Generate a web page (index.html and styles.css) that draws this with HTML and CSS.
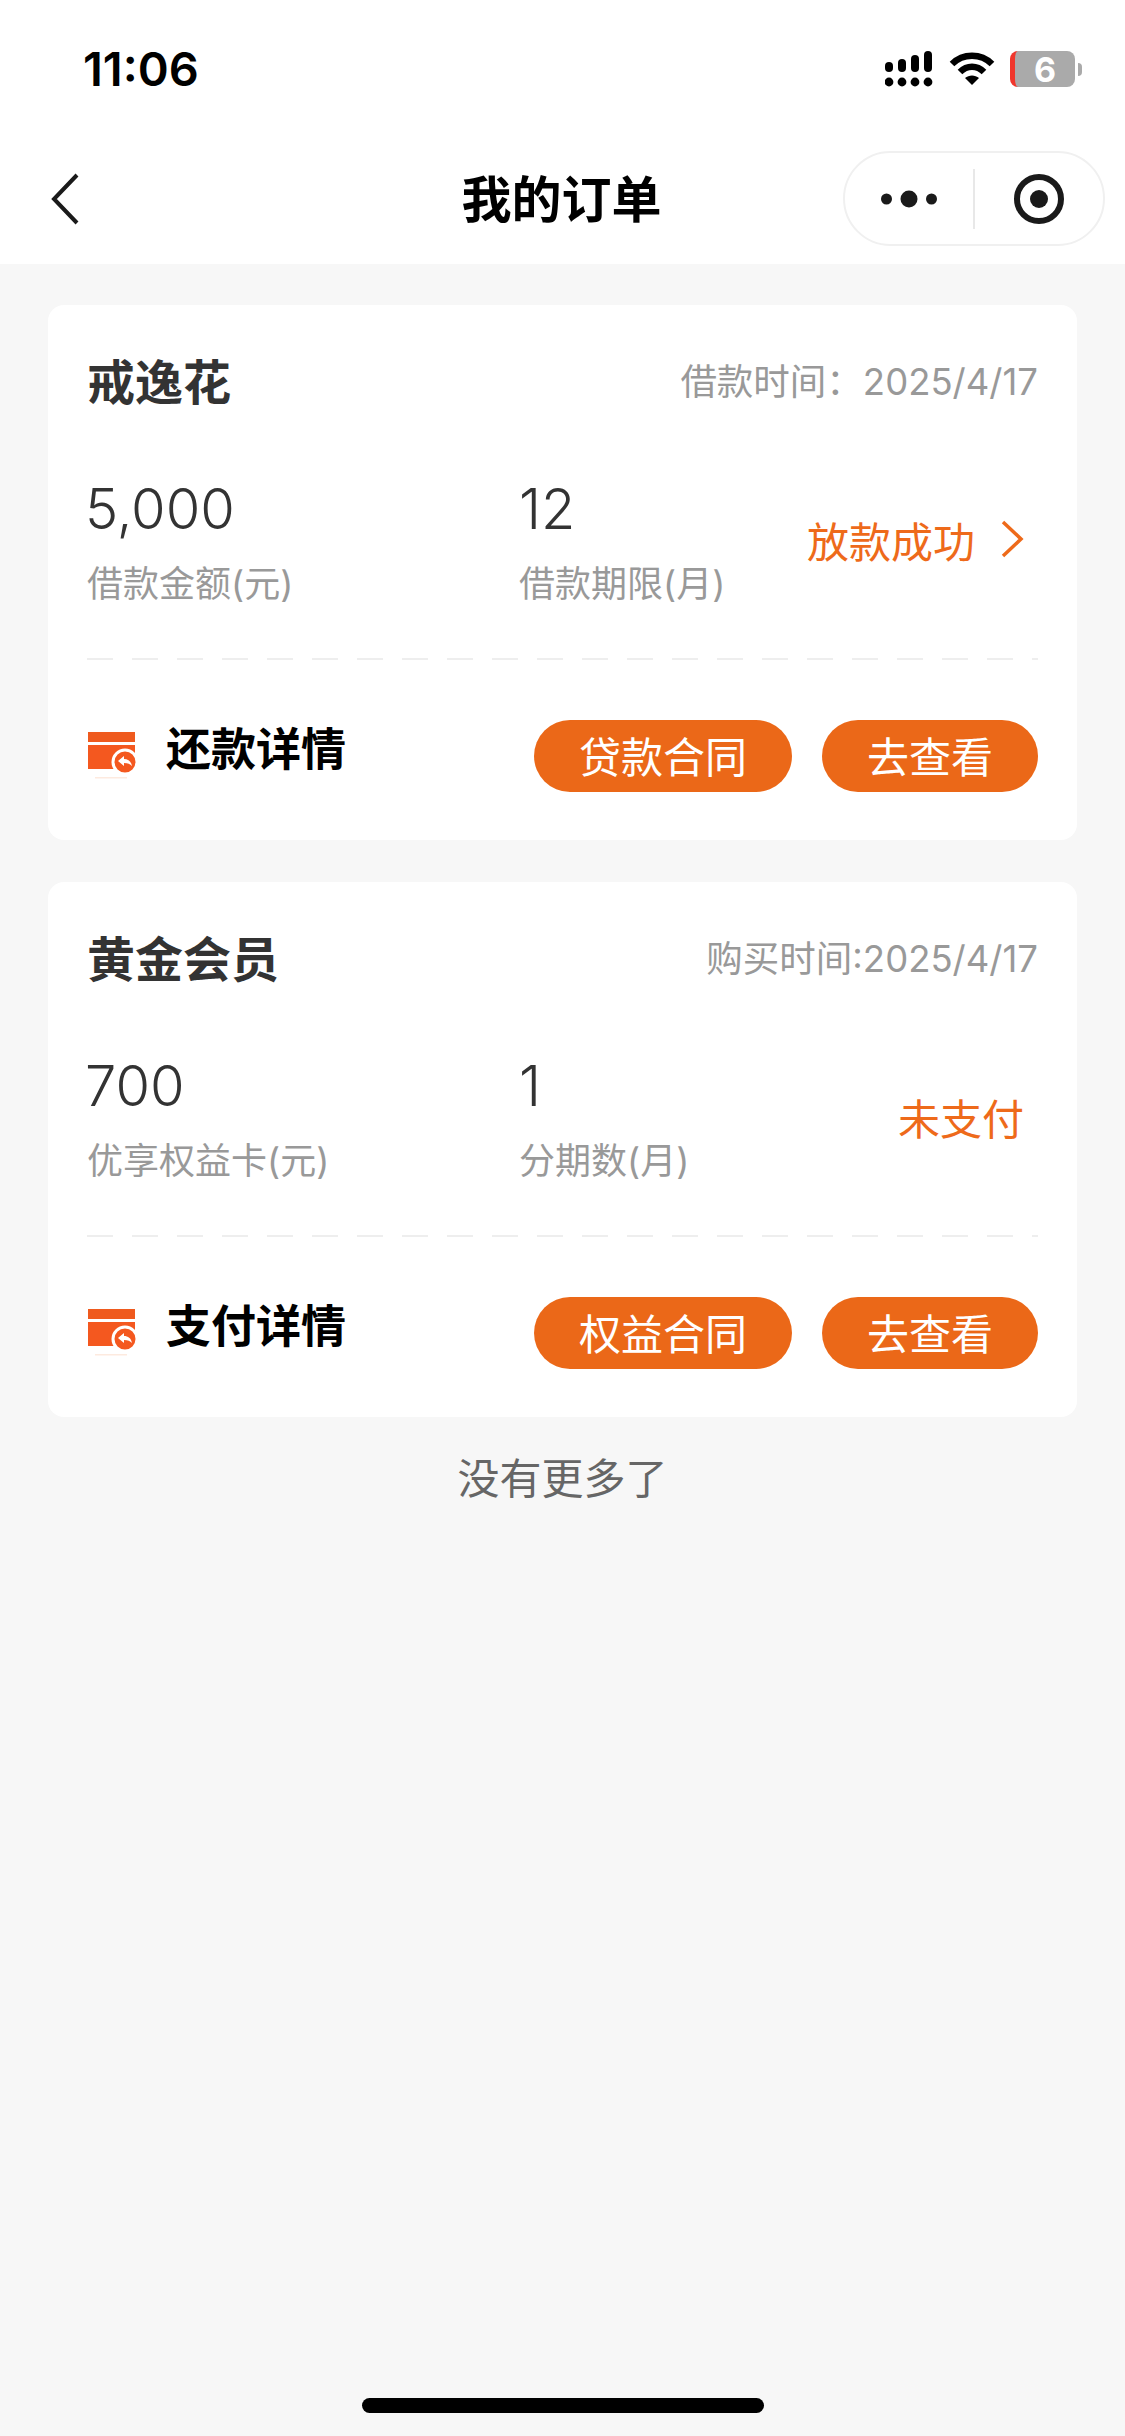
FILE: index.html
```html
<!DOCTYPE html>
<html lang="zh-CN">
<head>
    <meta charset="UTF-8">
    <meta name="viewport" content="width=device-width, initial-scale=1.0">
    <title>我的订单</title>
    <link rel="stylesheet" href="styles.css">
</head>
<body>
    <header class="top">
        <div class="status-bar">
            <span class="clock">11:06</span>
            <div class="status-icons">
                <svg class="signal" width="48" height="36" viewBox="0 0 48 36">
                    <rect x="0" y="11" width="8" height="10" rx="4"/>
                    <rect x="13" y="8" width="8" height="13" rx="4"/>
                    <rect x="26" y="4" width="8" height="17" rx="4"/>
                    <rect x="39" y="0" width="8" height="21" rx="4"/>
                    <circle cx="4" cy="31" r="4.4"/>
                    <circle cx="17" cy="31" r="4.4"/>
                    <circle cx="30" cy="31" r="4.4"/>
                    <circle cx="43" cy="31" r="4.4"/>
                </svg>
                <svg class="wifi" width="46" height="34" viewBox="0 0 46 34">
                    <path d="M3 12 C14 1 32 1 43 12" fill="none" stroke="#000" stroke-width="6.5"/>
                    <path d="M11 20 C18 13 28 13 35 20" fill="none" stroke="#000" stroke-width="6.5"/>
                    <path d="M16 26 C20 22.500 26 22.500 30 26 L23 33 Z"/>
                </svg>
                <div class="battery"><span class="battery-num">6</span></div>
                <div class="battery-nub"></div>
            </div>
        </div>
        <nav class="nav">
            <svg class="back" width="30" height="52" viewBox="0 0 30 52">
                <path d="M27 2 L4 26 L27 50" fill="none" stroke="#1a1a1a" stroke-width="4"/>
            </svg>
            <h1>我的订单</h1>
            <div class="capsule">
                <svg width="56" height="22" viewBox="0 0 56 22">
                    <circle cx="5.500" cy="11" r="5.500"/>
                    <circle cx="28" cy="11" r="8.500"/>
                    <circle cx="50.500" cy="11" r="5.500"/>
                </svg>
                <span class="capsule-line"></span>
                <svg width="52" height="52" viewBox="0 0 52 52">
                    <circle cx="26" cy="26" r="22" fill="none" stroke="#1a1a1a" stroke-width="6"/>
                    <circle cx="26" cy="26" r="9" fill="#1a1a1a"/>
                </svg>
            </div>
        </nav>
    </header>

    <main class="list">
        <section class="card">
            <div class="card-head">
                <h2>戒逸花</h2>
                <span class="time">借款时间：2025/4/17</span>
            </div>
            <div class="stats">
                <div class="stat stat-first">
                    <div class="num">5,000</div>
                    <div class="label">借款金额(元)</div>
                </div>
                <div class="stat">
                    <div class="num">12</div>
                    <div class="label">借款期限(月)</div>
                </div>
                <div class="state">
                    放款成功
                    <svg width="26" height="38" viewBox="0 0 26 38">
                        <path d="M4 2 L22 19 L4 36" fill="none" stroke="#ee6a1a" stroke-width="3.500"/>
                    </svg>
                </div>
            </div>
            <div class="dash-line"></div>
            <div class="card-foot">
                <svg class="card-icon" width="50" height="50" viewBox="0 0 50 50">
                    <rect x="1" y="1" width="47" height="10" fill="#ef5a1e"/>
                    <rect x="1" y="14" width="47" height="24" fill="#f4581f"/>
                    <circle cx="38" cy="31" r="12" fill="#f4581f" stroke="#fff" stroke-width="3"/>
                    <path d="M31 30 L37 25 L37 28 C41 28 44 30 45 35 C43 33 41 32 37 32 L37 35 Z" fill="#fff"/>
                    <rect x="8" y="46" width="32" height="1.500" fill="#fdeadf"/>
                </svg>
                <span class="foot-title">还款详情</span>
                <a class="pill pill-wide">贷款合同</a>
                <a class="pill">去查看</a>
            </div>
        </section>

        <section class="card">
            <div class="card-head">
                <h2>黄金会员</h2>
                <span class="time">购买时间:2025/4/17</span>
            </div>
            <div class="stats">
                <div class="stat stat-first">
                    <div class="num">700</div>
                    <div class="label">优享权益卡(元)</div>
                </div>
                <div class="stat">
                    <div class="num">1</div>
                    <div class="label">分期数(月)</div>
                </div>
                <div class="state state-unpaid">未支付</div>
            </div>
            <div class="dash-line"></div>
            <div class="card-foot">
                <svg class="card-icon" width="50" height="50" viewBox="0 0 50 50">
                    <rect x="1" y="1" width="47" height="10" fill="#ef5a1e"/>
                    <rect x="1" y="14" width="47" height="24" fill="#f4581f"/>
                    <circle cx="38" cy="31" r="12" fill="#f4581f" stroke="#fff" stroke-width="3"/>
                    <path d="M31 30 L37 25 L37 28 C41 28 44 30 45 35 C43 33 41 32 37 32 L37 35 Z" fill="#fff"/>
                    <rect x="8" y="46" width="32" height="1.500" fill="#fdeadf"/>
                </svg>
                <span class="foot-title">支付详情</span>
                <a class="pill pill-wide">权益合同</a>
                <a class="pill">去查看</a>
            </div>
        </section>

        <p class="no-more">没有更多了</p>
    </main>

    <div class="home-bar"></div>
</body>
</html>
```

FILE: styles.css
```css
* {
    box-sizing: border-box;
}
html, body {
    height: 100%;
}
body {
    margin: 0;
    display: flex;
    flex-direction: column;
    background-color: #f7f7f7;
    font-family: Inter, "Noto Sans CJK SC", sans-serif;
    color: #333;
}
.top {
    height: 264px;
    background-color: #fff;
}
.status-bar {
    height: 132px;
    padding: 51px 43px 0 83px;
    display: flex;
    justify-content: space-between;
    align-items: flex-start;
}
.clock {
    font-size: 47px;
    line-height: 36px;
    font-weight: 600;
    color: #000;
}
.status-icons {
    display: flex;
    align-items: center;
    height: 36px;
}
.wifi {
    margin-left: 16px;
}
.battery {
    width: 65px;
    height: 36px;
    margin-left: 15px;
    display: flex;
    align-items: center;
    justify-content: center;
    background-color: #aaa;
    border-left: 5px solid #f0362c;
    border-radius: 8px;
}
.battery-num {
    font-size: 34px;
    font-weight: 700;
    color: #fff;
}
.battery-nub {
    width: 4px;
    height: 13px;
    margin-left: 3px;
    background-color: #aaa;
    border-radius: 0 4px 4px 0;
}
.nav {
    height: 132px;
    padding: 19px 20px 18px;
    display: grid;
    grid-template-columns: 1fr auto 1fr;
    align-items: center;
}
.back {
    display: block;
    margin-left: 30px;
}
.nav h1 {
    margin: 0 2px 5px 0;
    font-size: 50px;
    font-weight: 700;
    color: #000;
}
.capsule {
    justify-self: end;
    width: 262px;
    height: 95px;
    display: flex;
    align-items: center;
    padding-left: 36px;
    border: 2px solid #f0f0f0;
    border-radius: 48px;
}
.capsule svg {
    display: block;
    fill: #1a1a1a;
}
.capsule-line {
    width: 2px;
    height: 60px;
    margin: 0 38px 0 36px;
    background-color: #e8e8e8;
}
.list {
    flex: 1;
    padding: 41px 48px 0;
}
.card {
    height: 535px;
    margin-bottom: 42px;
    padding: 0 39px;
    background-color: #fff;
    border-radius: 16px;
}
.card-head {
    height: 148px;
    display: flex;
    justify-content: space-between;
    align-items: center;
}
.card-head h2 {
    margin: 0;
    font-size: 48px;
    font-weight: 700;
    color: #333;
}
.time {
    font-size: 36.5px;
    color: #999;
}
.stats {
    height: 205px;
    padding-top: 20px;
    display: flex;
}
.stat {
    width: 288px;
}
.stat-first {
    width: 432px;
}
.num {
    height: 72px;
    margin-left: -2px;
    font-size: 56px;
    line-height: 72px;
    font-weight: 350;
    color: #333;
}
.stat + .stat .num {
    margin-left: 0;
}
.label {
    margin-top: 14px;
    font-size: 36px;
    line-height: 50px;
    color: #999;
}
.state {
    height: 68px;
    margin-top: 32px;
    display: flex;
    align-items: center;
    font-size: 42px;
    color: #ee6a1a;
}
.state svg {
    margin-left: 24px;
}
.state-unpaid {
    margin-left: 91px;
}
.dash-line {
    height: 2px;
    background-image: repeating-linear-gradient(90deg, #eee 0, #eee 26px, transparent 26px, transparent 45px);
}
.card-foot {
    height: 180px;
    padding-top: 12px;
    display: flex;
    align-items: center;
}
.card-icon {
    flex: none;
}
.foot-title {
    margin-left: 29px;
    margin-bottom: 20px;
    font-size: 45px;
    font-weight: 700;
    color: #000;
}
.pill {
    width: 216px;
    height: 72px;
    margin-left: 30px;
    padding-bottom: 3px;
    display: flex;
    align-items: center;
    justify-content: center;
    background-color: #eb6818;
    border-radius: 36px;
    font-size: 42px;
    color: #fff;
}
.pill-wide {
    width: 258px;
    margin-left: auto;
}
.no-more {
    margin: 0;
    margin-top: -10px;
    text-align: center;
    font-size: 42px;
    line-height: 60px;
    color: #666;
}
.home-bar {
    width: 402px;
    height: 15px;
    margin: 0 auto 23px;
    background-color: #000;
    border-radius: 8px;
}
```
